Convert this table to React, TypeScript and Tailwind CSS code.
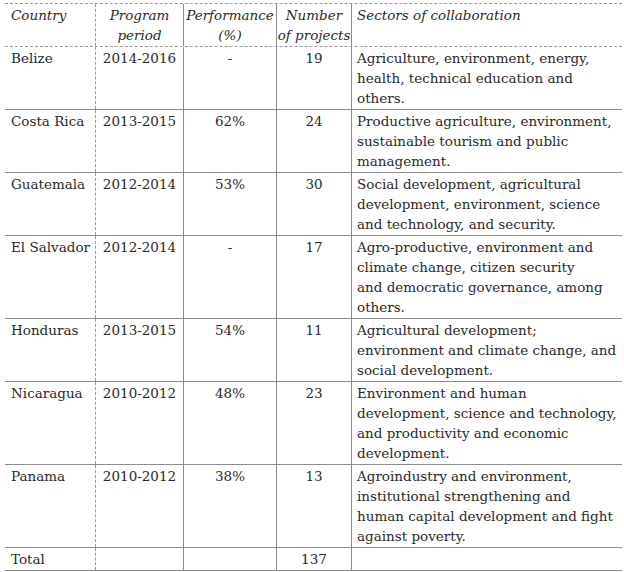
import React from "react";

type Row = {
  country: string;
  period: string;
  perf: string;
  num: string;
  sectors: string[];
};

const rows: Row[] = [
  { country: "Belize", period: "2014-2016", perf: "-", num: "19", sectors: ["Agriculture, environment, energy,", "health, technical education and", "others."] },
  { country: "Costa Rica", period: "2013-2015", perf: "62%", num: "24", sectors: ["Productive agriculture, environment,", "sustainable tourism and public", "management."] },
  { country: "Guatemala", period: "2012-2014", perf: "53%", num: "30", sectors: ["Social development, agricultural", "development, environment, science", "and technology, and security."] },
  { country: "El Salvador", period: "2012-2014", perf: "-", num: "17", sectors: ["Agro-productive, environment and", "climate change, citizen security", "and democratic governance, among", "others."] },
  { country: "Honduras", period: "2013-2015", perf: "54%", num: "11", sectors: ["Agricultural development;", "environment and climate change, and", "social development."] },
  { country: "Nicaragua", period: "2010-2012", perf: "48%", num: "23", sectors: ["Environment and human", "development, science and technology,", "and productivity and economic", "development."] },
  { country: "Panama", period: "2010-2012", perf: "38%", num: "13", sectors: ["Agroindustry and environment,", "institutional strengthening and", "human capital development and fight", "against poverty."] },
];

const cols = "grid grid-cols-[91px_88px_93px_75px_270px]";
const c1 = "border-r border-dashed border-[#9a9a9a] pl-[6px] py-[1px]";
const cm = "border-r border-[#8c8c8c] text-center py-[1px]";
const c5 = "pl-[5px] py-[1px]";

export default function App() {
  return (
    <div className="w-[624px] h-[572px] bg-white text-[#2a2a2a] pt-[3px] pl-[5px] font-['DejaVu_Serif',serif]">
      <div className="w-[617px] text-[13.5px] leading-[20px]">
        <div className={`${cols} italic border-t border-b border-dashed border-[#9a9a9a]`}>
          <div className={c1}>Country</div>
          <div className={cm}>Program<br />period</div>
          <div className={`${cm} whitespace-nowrap`}>Performance<br />(%)</div>
          <div className={`${cm} whitespace-nowrap`}>Number<br />of projects</div>
          <div className={c5}>Sectors of collaboration</div>
        </div>
        {rows.map((r) => (
          <div key={r.country} className={`${cols} border-b border-[#8c8c8c]`}>
            <div className={`${c1} whitespace-nowrap`}>{r.country}</div>
            <div className={cm}>{r.period}</div>
            <div className={cm}>{r.perf}</div>
            <div className={cm}>{r.num}</div>
            <div className={`${c5} whitespace-nowrap`}>
              {r.sectors.map((s, i) => (
                <div key={i}>{s}</div>
              ))}
            </div>
          </div>
        ))}
        <div className={`${cols} border-b border-[#8c8c8c]`}>
          <div className={c1}>Total</div>
          <div className={cm}></div>
          <div className={cm}></div>
          <div className={cm}>137</div>
          <div className={c5}></div>
        </div>
      </div>
    </div>
  );
}
